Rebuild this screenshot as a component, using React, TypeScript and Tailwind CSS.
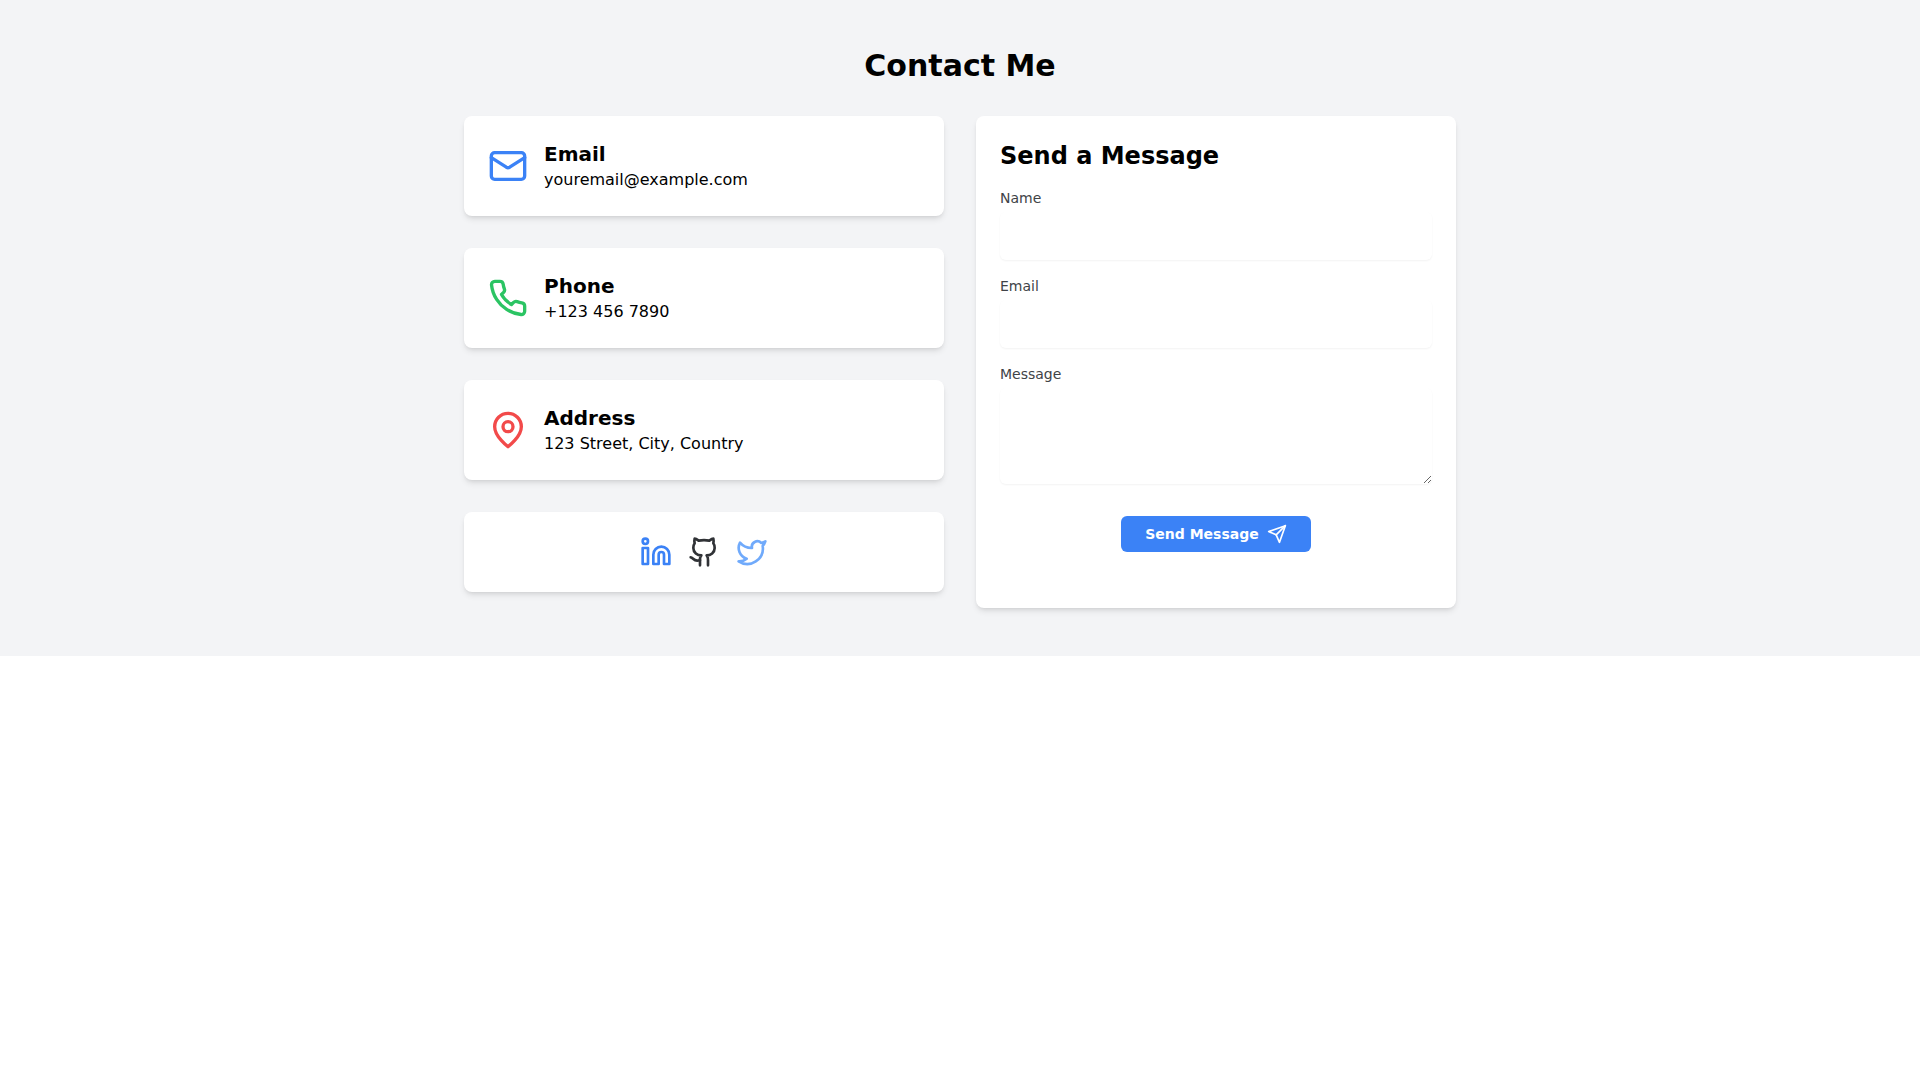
import React, { useState } from 'react';
import { Github, Linkedin, Mail, Twitter } from 'lucide-react';
import { FiPhone, FiSend } from 'react-icons/fi';

const fieldClass =
  'mt-1 block w-full rounded-md bg-white p-3 text-base shadow-[0_1px_2px_0_rgb(0_0_0/0.05)] outline-none focus:ring-2 focus:ring-[#3b82f6]';
const labelClass = 'block text-sm text-[#404347]';
const cardClass = 'rounded-lg bg-white p-6 shadow-[0_4px_6px_-1px_rgb(0_0_0/0.1),0_2px_4px_-2px_rgb(0_0_0/0.1)]';

function PinIcon({ className }: { className?: string }) {
  return (
    <svg
      className={className}
      viewBox="0 0 24 24"
      fill="none"
      stroke="currentColor"
      strokeWidth="2"
      strokeLinecap="round"
      strokeLinejoin="round"
      aria-hidden="true"
    >
      <path d="M20 10c0 6-8 12-8 12s-8-6-8-12a8 8 0 0 1 16 0Z" />
      <circle cx="12" cy="10" r="3" />
    </svg>
  );
}

const contacts = [
  { title: 'Email', text: 'youremail@example.com', icon: <Mail className="size-10 shrink-0 text-[#3b82f6]" /> },
  { title: 'Phone', text: '+123 456 7890', icon: <FiPhone className="size-10 shrink-0 text-[#2bc463]" /> },
  { title: 'Address', text: '123 Street, City, Country', icon: <PinIcon className="size-10 shrink-0 text-[#f24a4a]" /> },
];

export default function App() {
  const [form, setForm] = useState({ name: '', email: '', message: '' });

  const handleChange = (e: React.ChangeEvent<HTMLInputElement | HTMLTextAreaElement>) => {
    setForm({ ...form, [e.target.name]: e.target.value });
  };

  const handleSubmit = (e: React.FormEvent) => {
    e.preventDefault();
    setForm({ name: '', email: '', message: '' });
  };

  return (
    <section className="bg-[#f3f4f6] py-12 font-['DejaVu_Sans',sans-serif] text-black">
      <div className="mx-auto max-w-5xl px-4">
        <h1 className="mb-8 text-center text-3xl font-bold">Contact Me</h1>

        <div className="grid grid-cols-1 gap-8 md:grid-cols-2">
          <div className="flex flex-col gap-8 pb-4">
            {contacts.map((item) => (
              <div key={item.title} className={`${cardClass} flex items-center gap-4`}>
                {item.icon}
                <div>
                  <h2 className="text-xl font-semibold">{item.title}</h2>
                  <p>{item.text}</p>
                </div>
              </div>
            ))}

            {/* Social links */}
            <div className={`${cardClass} flex justify-center gap-4`}>
              <a href="#linkedin" aria-label="LinkedIn" className="text-[#3b82f6]">
                <Linkedin className="size-8" />
              </a>
              <a href="#github" aria-label="GitHub" className="text-[#303236]">
                <Github className="size-8" />
              </a>
              <a href="#twitter" aria-label="Twitter" className="text-[#70aafb]">
                <Twitter className="size-8" />
              </a>
            </div>
          </div>

          <div className={cardClass}>
            <h2 className="mb-4 text-2xl font-bold">Send a Message</h2>
            <form onSubmit={handleSubmit} className="flex flex-col gap-4">
              <div>
                <label htmlFor="name" className={labelClass}>Name</label>
                <input id="name" name="name" type="text" required value={form.name} onChange={handleChange} className={fieldClass} />
              </div>
              <div>
                <label htmlFor="email" className={labelClass}>Email</label>
                <input id="email" name="email" type="email" required value={form.email} onChange={handleChange} className={fieldClass} />
              </div>
              <div>
                <label htmlFor="message" className={labelClass}>Message</label>
                <textarea id="message" name="message" rows={3} required value={form.message} onChange={handleChange} className={fieldClass} />
              </div>
              <div className="mt-4 flex justify-center">
                <button
                  type="submit"
                  className="flex items-center gap-2 rounded-md bg-[#3b82f6] px-6 py-2 text-sm font-semibold text-white hover:bg-[#2563eb]"
                >
                  Send Message
                  <FiSend className="size-5" />
                </button>
              </div>
            </form>
          </div>
        </div>
      </div>
    </section>
  );
}
